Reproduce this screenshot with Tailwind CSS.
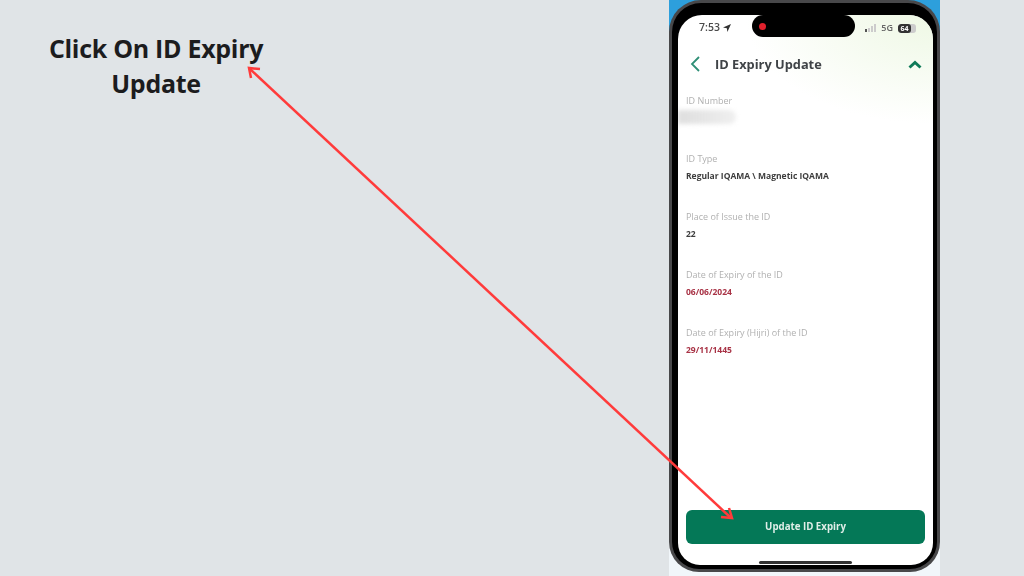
<!DOCTYPE html>
<html lang="en">
<head>
  <meta charset="UTF-8" />
  <title>ID Expiry Update</title>
  <script src="https://cdn.jsdelivr.net/npm/@tailwindcss/browser@4"></script>
</head>
<body class="bg-[#e0e4e7] overflow-hidden font-['Open_Sans',sans-serif]">
  <div class="relative w-[1024px] h-[576px] flex">

    <!-- Left caption -->
    <div class="w-[669px] shrink-0 pt-[31px] pl-[46px]">
      <h1 class="w-[220px] text-center text-[25px] leading-[35px] font-bold tracking-[-0.3px] text-[#1c1c1e] whitespace-nowrap">Click On ID Expiry<br>Update</h1>
    </div>

    <!-- Phone -->
    <div class="w-[271px] h-[576px] shrink-0 bg-[#f1f6fa] overflow-hidden">
      <div class="bg-[#2d9fdc] h-[40px] -mb-[40px]"></div>
      <div class="relative h-[572px] rounded-t-[32px] rounded-b-[30px] bg-[#48484a] p-[3px]">
        <div class="h-full rounded-t-[29px] rounded-b-[27px] bg-black pt-[12px] pl-[6px] pr-[4px] pb-[4px]">
          <div class="relative h-full flex flex-col rounded-t-[24px] rounded-b-[22px] overflow-hidden bg-white">
            <div class="absolute right-0 top-0 w-[190px] h-[110px] bg-radial-[at_100%_0%] from-[#eef8e4] to-transparent to-70%"></div>

            <!-- Status bar -->
            <div class="relative h-[26px] flex items-center pl-[21px] pr-[17px] text-[#4a4a4a]">
              <span class="text-[10.5px] font-semibold blur-[0.3px]">7:53</span>
              <svg class="ml-[3px]" width="8" height="8" viewBox="0 0 10 10"><path d="M10 0 L0 4.5 L4.8 5.2 L5.5 10 Z" fill="#333"/></svg>
              <div class="absolute left-[74px] top-0 w-[103px] h-[22px] bg-black rounded-full flex items-center pl-[7px]">
                <span class="w-[7px] h-[7px] rounded-full bg-[#e0202c]"></span>
              </div>
              <div class="ml-auto flex items-center gap-[5px] blur-[0.3px]">
                <div class="flex items-end gap-[1px] h-[8px]">
                  <span class="w-[2px] h-[3px] bg-[#555]"></span>
                  <span class="w-[2px] h-[4px] bg-[#ccc]"></span>
                  <span class="w-[2px] h-[6px] bg-[#ccc]"></span>
                  <span class="w-[2px] h-[8px] bg-[#ccc]"></span>
                </div>
                <span class="text-[9px] font-semibold text-[#666]">5G</span>
                <div class="w-[18px] h-[9px] rounded-[3px] bg-[#ccc] overflow-hidden">
                  <div class="w-[13px] h-[9px] rounded-[3px] bg-[#333] text-white text-[7px] leading-[9px] font-bold text-center">64</div>
                </div>
              </div>
            </div>

            <!-- Title bar -->
            <div class="relative flex items-center mt-[11px] h-[24px] pl-[11px] pr-[11px] blur-[0.4px]">
              <svg width="12" height="18" viewBox="0 0 12 18" fill="none"><path d="M10 2 L3 9 L10 16" stroke="#2f8f76" stroke-width="1.8"/></svg>
              <span class="ml-[14px] pt-[1px] text-[12.8px] font-bold text-[#3f4347]">ID Expiry Update</span>
              <svg class="ml-auto" width="14" height="9" viewBox="0 0 14 9" fill="none"><path d="M1.5 7.5 L7 2.5 L12.5 7.5" stroke="#0f7a58" stroke-width="3"/></svg>
            </div>

            <!-- Details -->
            <div class="relative flex flex-col px-[8px] pt-[19px] gap-[31px] blur-[0.6px]">
              <div class="h-[27px]">
                <p class="text-[9px] leading-[12px] text-[#b0b0b0]">ID Number</p>
                <div class="mt-[3px] -ml-[8px] w-[58px] h-[14px] bg-linear-to-r from-[#dedede] to-[#d8d8d8]/40 blur-[2px] rounded-r-full"></div>
              </div>
              <div class="h-[27px]">
                <p class="text-[9px] leading-[12px] text-[#b0b0b0]">ID Type</p>
                <p class="mt-[5px] text-[8.5px] leading-[12px] font-bold text-[#3d3d3d]">Regular IQAMA \ Magnetic IQAMA</p>
              </div>
              <div class="h-[27px]">
                <p class="text-[9px] leading-[12px] text-[#b0b0b0]">Place of Issue the ID</p>
                <p class="mt-[5px] text-[8.5px] leading-[12px] font-bold text-[#3d3d3d]">22</p>
              </div>
              <div class="h-[27px]">
                <p class="text-[9px] leading-[12px] text-[#b0b0b0]">Date of Expiry of the ID</p>
                <p class="mt-[5px] text-[8.5px] leading-[12px] font-bold text-[#a83245]">06/06/2024</p>
              </div>
              <div class="h-[27px]">
                <p class="text-[9px] leading-[12px] text-[#b0b0b0]">Date of Expiry (Hijri) of the ID</p>
                <p class="mt-[5px] text-[8.5px] leading-[12px] font-bold text-[#a83245]">29/11/1445</p>
              </div>
            </div>

            <!-- Button -->
            <div class="relative mt-auto mb-[21px] mx-[8px] h-[34px] rounded-[6px] bg-[#047857] flex items-center justify-center">
              <span class="text-[9.7px] font-bold text-[#dfeee8] blur-[0.3px]">Update ID Expiry</span>
            </div>
            <div class="absolute left-[81px] bottom-[1px] w-[93px] h-[3px] rounded-full bg-[#333]"></div>
          </div>
        </div>
      </div>
    </div>

    <!-- Arrow over everything -->
    <svg class="absolute left-0 top-0 pointer-events-none" width="1024" height="576" viewBox="0 0 1024 576" fill="none">
      <path d="M250 69 L730 517" stroke="#ff3b3b" stroke-width="2.5"/>
      <path d="M260 69 L249 68 L251 78" stroke="#ff3b3b" stroke-width="2.5"/>
      <path d="M721 517 L732 518 L729 508" stroke="#ff3b3b" stroke-width="2.5"/>
    </svg>
  </div>
</body>
</html>
